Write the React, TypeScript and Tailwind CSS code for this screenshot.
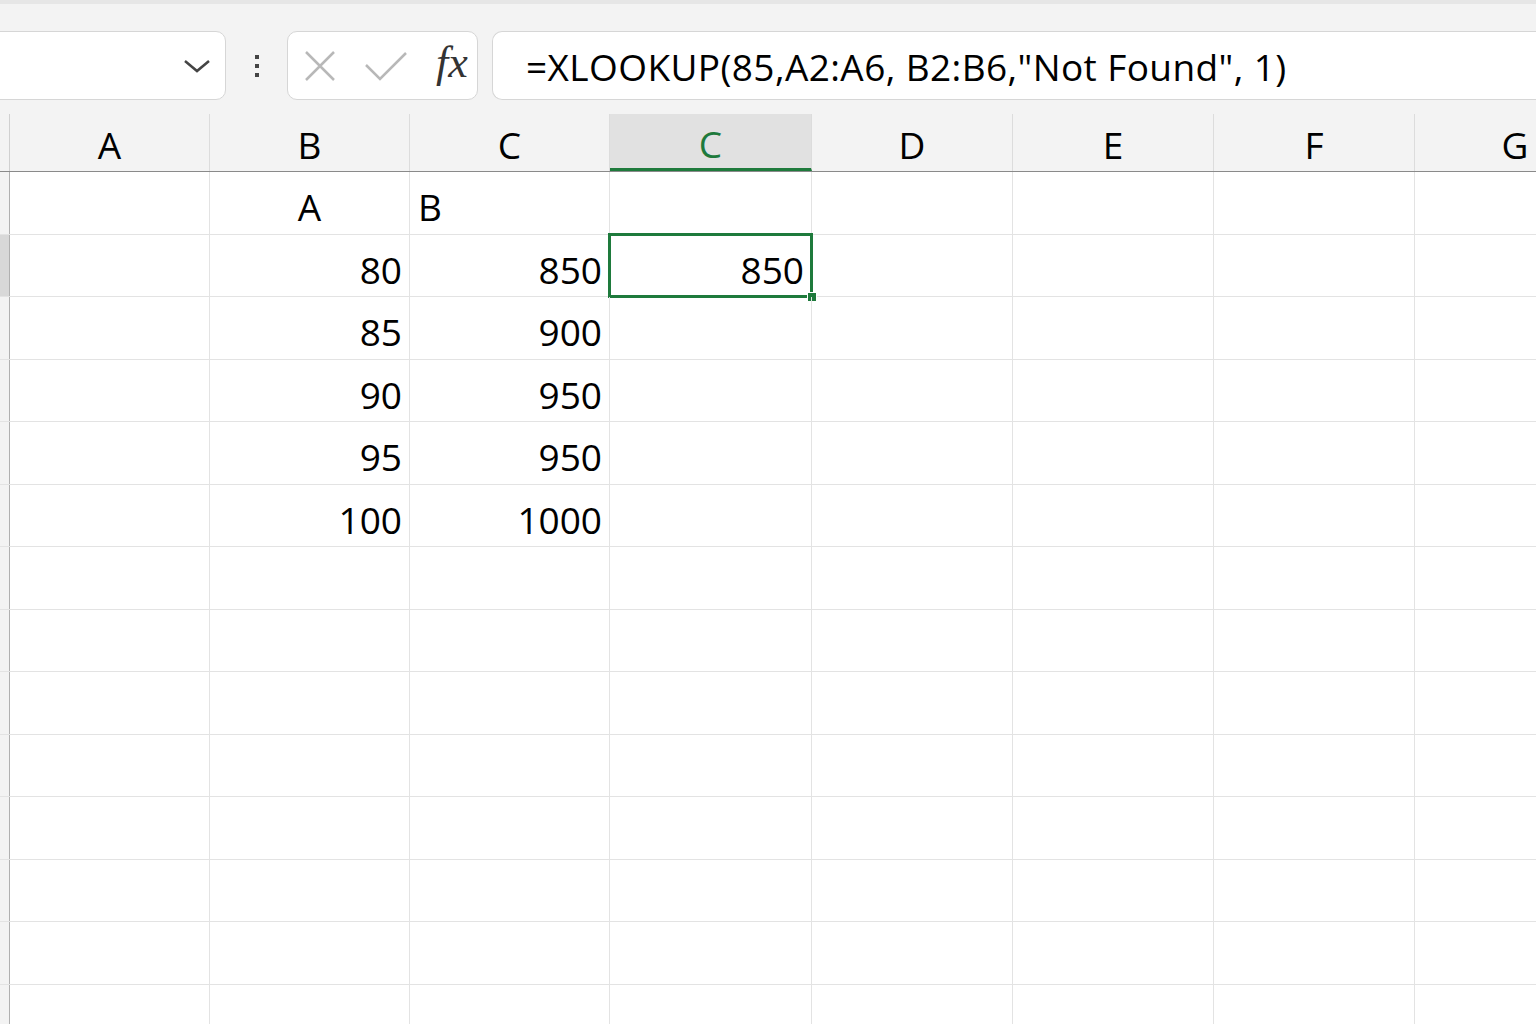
const cols = [
  { w: "w-[200px]", label: "A" },
  { w: "w-[200px]", label: "B" },
  { w: "w-[200px]", label: "C" },
  { w: "w-[202px]", label: "C", sel: true },
  { w: "w-[201px]", label: "D" },
  { w: "w-[201px]", label: "E" },
  { w: "w-[201px]", label: "F" },
  { w: "w-[201px]", label: "G" },
];

const data: (string | { t: string; left?: boolean })[][] = [
  ["", "A", { t: "B", left: true }, ""],
  ["", "80", "850", "850"],
  ["", "85", "900", ""],
  ["", "90", "950", ""],
  ["", "95", "950", ""],
  ["", "100", "1000", ""],
];

export default function App() {
  const rows = Array.from({ length: 14 }, (_, i) => data[i] ?? []);
  return (
    <div className="w-[1536px] h-[1024px] overflow-hidden bg-white text-black" style={{ fontFamily: '"Open Sans", "Noto Sans", sans-serif' }}>
      <div className="h-[114px] bg-[#f3f3f3] border-t-[4px] border-[#e6e6e6] flex items-start pt-[27px]">
        <div className="w-[236px] h-[69px] -ml-[10px] shrink-0 bg-white border border-[#d6d6d6] rounded-[10px] flex items-center justify-end pr-[14px]">
          <svg width="28" height="16" viewBox="0 0 28 16"><path d="M2 3 L14 13 L26 3" fill="none" stroke="#444" strokeWidth="2.5" /></svg>
        </div>
        <div className="w-[61px] h-[69px] shrink-0 flex flex-col items-center justify-center gap-[5px]">
          <span className="w-[4px] h-[4px] bg-[#444]" />
          <span className="w-[4px] h-[4px] bg-[#444]" />
          <span className="w-[4px] h-[4px] bg-[#444]" />
        </div>
        <div className="w-[191px] h-[69px] shrink-0 bg-white border border-[#d6d6d6] rounded-[10px] flex items-center pl-[16px] gap-[28px]">
          <svg width="32" height="32" viewBox="0 0 32 32"><path d="M2 2 L30 30 M30 2 L2 30" stroke="#b8b8b8" strokeWidth="2.5" /></svg>
          <svg width="44" height="30" viewBox="0 0 44 30"><path d="M2 14 L16 28 L42 2" fill="none" stroke="#b8b8b8" strokeWidth="2.5" /></svg>
          <span className="italic text-[44px] leading-none -mt-[6px] text-[#333]" style={{ fontFamily: '"Liberation Serif", serif' }}>fx</span>
        </div>
        <div className="ml-[14px] flex-1 h-[69px] bg-white border border-[#d6d6d6] rounded-l-[10px] border-r-0 flex items-center pl-[33px] pt-[2px] text-[37px] tracking-[0.4px] whitespace-nowrap">
          =XLOOKUP(85,A2:A6, B2:B6,"Not Found", 1)
        </div>
      </div>
      <div className="flex h-[58px] bg-[#f3f3f3] border-b border-[#8a8a8a]">
        <div className="w-[10px] shrink-0 border-r border-[#d0d0d0]" />
        {cols.map((c, i) => (
          <div key={i} className={`${c.w} shrink-0 border-r border-[#dcdcdc] flex items-center justify-center pt-[5px] text-[37px] ${c.sel ? "bg-[#e1e1e1] text-[#1e7a3c] border-b-[3px] border-b-[#1e7a3c]" : ""}`}>
            {c.label}
          </div>
        ))}
      </div>
      {rows.map((r, ri) => (
        <div key={ri} className="flex h-[62.5px] border-b border-[#e3e3e3]">
          <div className={`w-[10px] shrink-0 border-r border-[#b0b0b0] ${ri === 1 ? "bg-[#d8d8d8]" : "bg-[#f3f3f3]"}`} />
          {cols.map((c, ci) => {
            const v = r[ci];
            const t = typeof v === "string" ? v : v?.t ?? "";
            const left = typeof v === "object" && v?.left;
            const sel = ri === 1 && ci === 3;
            return (
              <div key={ci} className={`${c.w} shrink-0 border-r border-[#e3e3e3] relative flex items-center pt-[8px] text-[37px] ${ci === 1 && ri === 0 ? "justify-center" : left ? "justify-start pl-[8px]" : "justify-end pr-[7px]"}`}>
                {t}
                {sel && (
                  <>
                    <div className="absolute -left-[2px] -top-[2px] -right-[2px] -bottom-[2px] border-[3px] border-[#1e7a3c]" />
                    <div className="absolute -right-[6px] -bottom-[6px] w-[10px] h-[10px] bg-[#1e7a3c] border border-white" />
                  </>
                )}
              </div>
            );
          })}
        </div>
      ))}
    </div>
  );
}
